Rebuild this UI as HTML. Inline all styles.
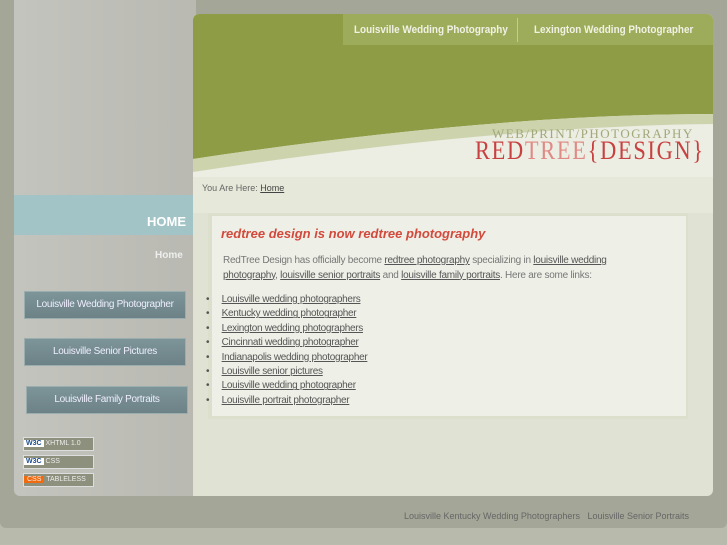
<!DOCTYPE html>
<html><head><style>
*{margin:0;padding:0;box-sizing:border-box}
body{width:727px;height:545px;background:#b8baac;font-family:"Liberation Sans",sans-serif;position:relative;overflow:hidden}
.abs{position:absolute}
a{color:#555;text-decoration:underline}
.n{transform:scaleX(.9);transform-origin:left;white-space:nowrap}
</style></head><body>
<div class="abs" style="left:0;top:0;width:727px;height:528px;background:#a4a698;border-radius:0 0 6px 6px"></div>
<div class="abs" style="left:14px;top:0;width:182px;height:496px;background:linear-gradient(90deg,#c4c4be,#b9b9b2);border-radius:0 0 0 6px"></div>
<div class="abs" style="left:193px;top:14px;width:520px;height:482px;background:#e0e2d4;border-radius:6px 6px 6px 0;overflow:hidden">
  <div class="abs" style="left:0;top:0;width:520px;height:175px;background:#ecede3"></div>
  <svg class="abs" style="left:0;top:0" width="520" height="175">
    <path d="M0 0H520V100 Q300 100 0 145Z" fill="#8d9c45"/>
    <path d="M0 145 Q300 100 520 100 V110 Q300 112 0 158Z" fill="#cdd4ad"/>
  </svg>
  <div class="abs" style="left:150px;top:0;width:370px;height:31px;background:rgba(170,185,110,.55)"></div>
  <div class="abs" style="left:324px;top:4px;width:1px;height:24px;background:rgba(230,235,200,.5)"></div>
  <div class="abs n" style="left:161px;top:10px;font-size:11px;font-weight:bold;color:#f1f1e4">Louisville Wedding Photography</div>
  <div class="abs n" style="left:341px;top:10px;font-size:11px;font-weight:bold;color:#f1f1e4">Lexington Wedding Photographer</div>
  <div class="abs" style="left:299px;top:112px;font-family:'Liberation Serif',serif;font-size:13px;letter-spacing:1.5px;color:#a3a87a;white-space:nowrap">WEB/PRINT/PHOTOGRAPHY</div>
  <div class="abs" style="left:282px;top:122px;font-family:'Liberation Serif',serif;font-size:26px;letter-spacing:2px;color:#c84040;transform:scaleX(.86);transform-origin:left;white-space:nowrap">RED<span style="color:#e08a85">TREE</span>{DESIGN}</div>
  <div class="abs" style="left:0;top:163px;width:520px;height:36px;background:#e6e8d9"></div>
  <div class="abs" style="left:9px;top:169px;font-size:9px;color:#666">You Are Here: <a style="color:#444">Home</a></div>
  <div class="abs" style="left:15px;top:199px;width:480px;height:206px;background:#dcdfcc"></div>
  <div class="abs" style="left:19px;top:202px;width:474px;height:200px;background:#eeefe7"></div>
  <div class="abs" style="left:28px;top:212px;font-size:13px;font-weight:bold;font-style:italic;color:#d24a3c">redtree design is now redtree photography</div>
  <div class="abs" style="left:30px;top:240px;width:420px;font-size:10px;line-height:14.5px;color:#777;letter-spacing:-0.25px">RedTree Design has officially become <a>redtree photography</a> specializing in <a>louisville wedding photography</a>, <a>louisville senior portraits</a> and <a>louisville family portraits</a>. Here are some links:</div>
  <ul class="abs" style="left:13px;top:279px;font-size:10px;line-height:14.4px;color:#555;padding-left:0;list-style:none;letter-spacing:-0.3px">
    <li>• &nbsp;&nbsp;&nbsp;&nbsp;<a>Louisville wedding photographers</a></li>
    <li>• &nbsp;&nbsp;&nbsp;&nbsp;<a>Kentucky wedding photographer</a></li>
    <li>• &nbsp;&nbsp;&nbsp;&nbsp;<a>Lexington wedding photographers</a></li>
    <li>• &nbsp;&nbsp;&nbsp;&nbsp;<a>Cincinnati wedding photographer</a></li>
    <li>• &nbsp;&nbsp;&nbsp;&nbsp;<a>Indianapolis wedding photographer</a></li>
    <li>• &nbsp;&nbsp;&nbsp;&nbsp;<a>Louisville senior pictures</a></li>
    <li>• &nbsp;&nbsp;&nbsp;&nbsp;<a>Louisville wedding photographer</a></li>
    <li>• &nbsp;&nbsp;&nbsp;&nbsp;<a>Louisville portrait photographer</a></li>
  </ul>
</div>
<div class="abs" style="left:14px;top:195px;width:179px;height:40px;background:#a2c4c6"></div>
<div class="abs" style="left:147px;top:214px;font-size:13px;font-weight:bold;color:#fff">HOME</div>
<div class="abs" style="left:155px;top:250px;font-size:10px;font-weight:bold;color:#eee">Home</div>
<div class="abs" style="left:24px;top:291px;width:162px;height:28px;background:linear-gradient(#7d9498,#6c8286);border:1px solid #9aaeb0;color:#eef;font-size:10px;text-align:center;line-height:26px;letter-spacing:-0.3px">Louisville Wedding Photographer</div>
<div class="abs" style="left:24px;top:338px;width:162px;height:28px;background:linear-gradient(#7d9498,#6c8286);border:1px solid #9aaeb0;color:#eef;font-size:10px;text-align:center;line-height:26px;letter-spacing:-0.3px">Louisville Senior Pictures</div>
<div class="abs" style="left:26px;top:386px;width:162px;height:28px;background:linear-gradient(#7d9498,#6c8286);border:1px solid #9aaeb0;color:#eef;font-size:10px;text-align:center;line-height:26px;letter-spacing:-0.3px">Louisville Family Portraits</div>
<div class="abs" style="left:23px;top:437px;width:71px;height:14px;background:#8c907c;border:1px solid #ddd;font-size:7px;color:#eee;line-height:12px"><span style="background:#fff;color:#1a4a8a;font-weight:bold;padding:0 2px">W3C</span> XHTML 1.0</div>
<div class="abs" style="left:23px;top:455px;width:71px;height:14px;background:#8c907c;border:1px solid #ddd;font-size:7px;color:#eee;line-height:12px"><span style="background:#fff;color:#1a4a8a;font-weight:bold;padding:0 2px">W3C</span> CSS</div>
<div class="abs" style="left:23px;top:473px;width:71px;height:14px;background:#8c907c;border:1px solid #ddd;font-size:7px;color:#eee;line-height:12px"><span style="background:#f06a10;padding:0 3px">CSS</span> TABLELESS</div>
<div class="abs" style="left:404px;top:511px;font-size:9px;color:#666">Louisville Kentucky Wedding Photographers &nbsp; Louisville Senior Portraits</div>
</body></html>
